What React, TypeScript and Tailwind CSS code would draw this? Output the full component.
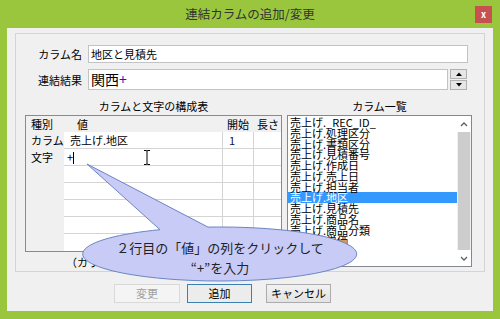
const listItems = [
  "売上げ._REC_ID_",
  "売上げ.処理区分",
  "売上げ.書類区分",
  "売上げ.見積番号",
  "売上げ.作成日",
  "売上げ.売上日",
  "売上げ.担当者",
  "売上げ.地区",
  "売上げ.見積先",
  "売上げ.商品名",
  "売上げ.商品分類",
  "売上げ.単価",
]

const rows = [
  { kind: "カラム", value: "売上げ.地区", start: "1", editing: false },
  { kind: "文字", value: "+", start: "", editing: true },
  { kind: "", value: "", start: "", editing: false },
  { kind: "", value: "", start: "", editing: false },
  { kind: "", value: "", start: "", editing: false },
  { kind: "", value: "", start: "", editing: false },
  { kind: "", value: "", start: "", editing: false },
]

function Callout() {
  return (
    <>
      <svg className="absolute left-0 top-0 pointer-events-none" width="500" height="319">
        <path
          d="M208 227.1 A137 27 0 1 1 160 229.7 L87 164 Z"
          fill="#c8cbf6"
          stroke="#6a86c2"
          strokeWidth="1"
        />
      </svg>
      <div className="absolute left-[83px] top-[238px] w-[274px] text-center text-[13px] leading-[20px] text-[#222] pointer-events-none">
        <div>２行目の「値」の列をクリックして</div>
        <div>“+”を入力</div>
      </div>
    </>
  )
}

function Grid() {
  return (
    <div className="w-[257px] h-[137px] border border-[#8a8a8a] bg-[#f0f0f0] flex flex-col">
      {/* header */}
      <div className="flex h-[16px] leading-[16px] text-[11px]">
        <div className="w-[38px] pl-[5px]">種別</div>
        <div className="w-[159px] pl-[13px]">値</div>
        <div className="w-[31px] pl-[4px]">開始</div>
        <div className="w-[27px] pl-[3px]">長さ</div>
      </div>
      {rows.map((r, i) => (
        <div key={i} className="flex h-[17px] text-[11px] leading-[16px]">
          <div className="w-[38px] pl-[5px]">{r.kind}</div>
          <div
            className={
              "relative w-[159px] bg-white border-r border-[#d4d4d4] " +
              (i < rows.length - 1 ? "border-b " : "") +
              (r.editing ? "pl-[3px]" : "pl-[6px]")
            }
          >
            {r.value}
            {r.editing && <span className="inline-block align-middle w-px h-[12px] bg-black mb-[2px]" />}
            {r.editing && (
              <svg className="absolute left-[79px] top-[1px]" width="8" height="15">
                <path d="M1 0.5h2.5l0.5 1 0.5-1h2.5M4 1.5v12M1 14.5h2.5l0.5-1 0.5 1h2.5" stroke="#000" fill="none" />
              </svg>
            )}
          </div>
          <div
            className={
              "w-[31px] bg-white border-r border-[#d4d4d4] pl-[6px] text-[#101040] " +
              (i < rows.length - 1 ? "border-b" : "")
            }
          >
            {r.start}
          </div>
          <div className={"w-[27px] bg-white border-[#d4d4d4] " + (i < rows.length - 1 ? "border-b" : "")} />
        </div>
      ))}
    </div>
  )
}

function ColumnList() {
  return (
    <div className="w-[185px] h-[152px] border border-[#828790] bg-white flex">
      <div className="w-[169px] pt-[1px]">
        {listItems.map((item, i) => (
          <div
            key={item}
            className={
              "h-[10.75px] leading-[10.75px] text-[11px] pl-[2px] whitespace-nowrap " +
              (i === 7 ? "bg-[#3399ff] text-white" : "text-black")
            }
          >
            {item}
          </div>
        ))}
      </div>
      <div className="w-[14px] flex flex-col bg-[#f0f0f0]">
        <div className="h-[16px] bg-white flex items-center justify-center">
          <svg width="8" height="5">
            <path d="M1 4l3-3 3 3" stroke="#606060" strokeWidth="1.3" fill="none" />
          </svg>
        </div>
        <div className="flex-1 bg-[#cdcdcd] mx-[1px]" />
        <div className="h-[16px] bg-white flex items-center justify-center">
          <svg width="8" height="5">
            <path d="M1 1l3 3 3-3" stroke="#606060" strokeWidth="1.3" fill="none" />
          </svg>
        </div>
      </div>
    </div>
  )
}

export default function App() {
  return (
    <div className="relative w-[500px] h-[319px] bg-[#9ac63d] flex flex-col overflow-hidden font-['Noto_Sans_CJK_JP',sans-serif] text-[11px] text-black">
      {/* title bar */}
      <div className="h-[28px] grid grid-cols-[1fr_auto_1fr] items-center">
        <div />
        <div className="text-[12.5px] leading-none text-[#333]">連結カラムの追加/変更</div>
        <div className="flex justify-end pr-[8px]">
          <div className="w-[17px] h-[17px] bg-[#c75050] flex items-center justify-center text-white text-[9px] font-bold leading-none">
            x
          </div>
        </div>
      </div>

      {/* client area */}
      <div className="mx-[7px] mb-[8px] flex-1 bg-[#f0f0f0] flex flex-col">
        <div className="mx-[8px] mt-[5px] h-[239px] border border-[#d4d4d4] flex flex-col">
          <div className="flex items-center mt-[11px]">
            <div className="w-[66px] text-right leading-[18px]">カラム名</div>
            <div className="ml-[6px] w-[380px] h-[18px] bg-white border border-[#c3c3c3] px-[2px] leading-[16px]">
              地区と見積先
            </div>
          </div>
          <div className="flex items-center mt-[6px]">
            <div className="w-[66px] text-right leading-[18px]">連結結果</div>
            <div className="ml-[6px] w-[360px] h-[21px] bg-white border border-[#c3c3c3] px-[2px] text-[14px] leading-[19px]">
              関西<span className="text-[#1a1ad0]">+</span>
            </div>
            <div className="ml-[2px] w-[17px] h-[21px] flex flex-col gap-px">
              <div className="flex-1 border border-[#b0b0b0] bg-[#e6e6e6] flex items-center justify-center">
                <svg width="6" height="4">
                  <path d="M0 4L3 0.5L6 4Z" fill="#000" />
                </svg>
              </div>
              <div className="flex-1 border border-[#b0b0b0] bg-[#e6e6e6] flex items-center justify-center">
                <svg width="6" height="4">
                  <path d="M0 0L3 3.5L6 0Z" fill="#000" />
                </svg>
              </div>
            </div>
          </div>

          <div className="flex mt-[9px] pl-[9px] gap-[5px]">
            <div className="w-[257px] flex flex-col">
              <div className="h-[16px] leading-[14px] text-center">カラムと文字の構成表</div>
              <Grid />
              <div className="pl-[41px] mt-[3px] leading-[14px]">（カラムを追加）</div>
            </div>
            <div className="w-[185px] flex flex-col">
              <div className="h-[16px] leading-[14px] text-center">カラム一覧</div>
              <ColumnList />
            </div>
          </div>
        </div>

        <div className="flex mt-[12px] pl-[107px] h-[19px]">
          <div className="w-[66px] h-[19px] border border-[#d9d9d9] bg-[#f4f4f4] text-[#a0a0a0] flex items-center justify-center">
            変更
          </div>
          <div className="ml-[7px] w-[65px] h-[19px] border border-[#3c7fb1] bg-[#ececec] flex items-center justify-center">
            追加
          </div>
          <div className="ml-[14px] w-[65px] h-[19px] border border-[#acacac] bg-gradient-to-b from-[#f2f2f2] to-[#e3e3e3] flex items-center justify-center">
            キャンセル
          </div>
        </div>
      </div>

      <Callout />
    </div>
  )
}
